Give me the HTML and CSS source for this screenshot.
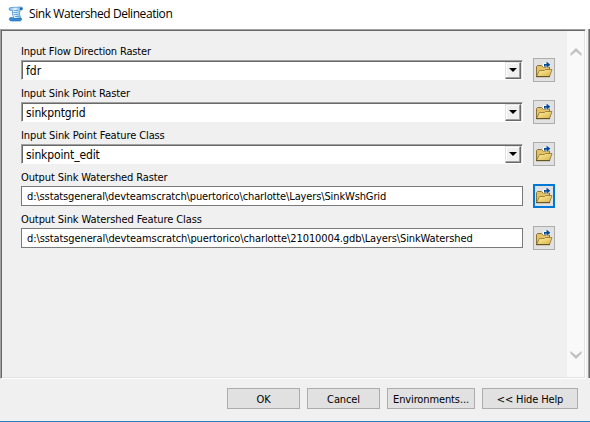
FILE: index.html
```
<!DOCTYPE html>
<html lang="en">
<head>
<meta charset="utf-8">
<title>Sink Watershed Delineation</title>
<link rel="stylesheet" href="styles.css">
</head>
<body>
<svg width="0" height="0" class="defs">
  <defs>
    <linearGradient id="gold" x1="0" y1="0" x2="1" y2="1"><stop offset="0" stop-color="#fff3a0"/><stop offset="1" stop-color="#d9b04a"/></linearGradient>
    <linearGradient id="paper" x1="0" y1="0" x2="1" y2="0"><stop offset="0" stop-color="#6db4ec"/><stop offset=".45" stop-color="#e4f4ff"/><stop offset="1" stop-color="#4b97d8"/></linearGradient>
    <symbol id="folder" viewBox="0 0 18 18">
      <path d="M1.500 15.500V5.500l1-1h4l1.500 1.500H14.500v9.500z" fill="#e3c365" stroke="#8b7233"/>
      <path d="M1.500 15.500L4.500 9.500h5l1-1h6.500l-2.500 7z" fill="url(#gold)" stroke="#8b7233" stroke-width=".8"/>
      <path d="M1 15.700h14" stroke="#5a471c" stroke-width=".9"/>
      <path d="M8 6V2.500h3V0l5.500 3.700L11 7V5h-1.500v1z" fill="#fff"/>
      <path d="M9 5.500V3h2.500V.500l4 3.200-4 3V4.500h-1v1z" fill="#084b91"/>
    </symbol>
  </defs>
</svg>
<div class="window">
  <header class="title">
    <svg class="scroll-icon" viewBox="0 0 16 16">
      <path d="M3 1.500Q1 1.500 1 3t2 1.500h1.500Q3.500 8 6 12.500H13Q10.500 8 12 4h1.500Q15 3.500 14.500 2T12.500 1z" fill="url(#paper)" stroke="#4089c9" stroke-width=".7"/>
      <path d="M2.500 11.500Q1 12 1.300 13.500T3.500 15H12q2-.5 1.500-2.500H6Q5 11 2.500 11.500z" fill="#378bd4" stroke="#1b64a9" stroke-width=".6"/>
      <path d="M6 4.500h4M5.500 6.500h4M6 8.500h4M7 10.500h4" stroke="#4b98d9" stroke-width=".8"/>
      <path d="M12.500 1.500Q11.500 2.500 12 4h1.500Q15.500 2.500 12.500 1.500" fill="#1769b5"/>
    </svg>
    <h1>Sink Watershed Delineation</h1>
  </header>
  <div class="body">
    <main class="panel">
      <form class="fields">
        <div class="field"><div class="main"><label class="l1">Input Flow Direction Raster</label><div class="combo"><span class="v1">fdr</span><i class="drop"></i></div></div><button type="button" class="browse"><svg><use href="#folder"/></svg></button></div>
        <div class="field"><div class="main"><label class="l2">Input Sink Point Raster</label><div class="combo"><span class="v2">sinkpntgrid</span><i class="drop"></i></div></div><button type="button" class="browse"><svg><use href="#folder"/></svg></button></div>
        <div class="field"><div class="main"><label class="l3">Input Sink Point Feature Class</label><div class="combo"><span class="v3">sinkpoint_edit</span><i class="drop"></i></div></div><button type="button" class="browse"><svg><use href="#folder"/></svg></button></div>
        <div class="field"><div class="main"><label class="l4">Output Sink Watershed Raster</label><div class="path"><span class="v4">d:\sstatsgeneral\devteamscratch\puertorico\charlotte\Layers\SinkWshGrid</span></div></div><button type="button" class="browse active"><svg><use href="#folder"/></svg></button></div>
        <div class="field"><div class="main"><label class="l5">Output Sink Watershed Feature Class</label><div class="path"><span class="v5">d:\sstatsgeneral\devteamscratch\puertorico\charlotte\21010004.gdb\Layers\SinkWatershed</span></div></div><button type="button" class="browse"><svg><use href="#folder"/></svg></button></div>
      </form>
      <div class="scrollbar">
        <svg viewBox="0 0 12 9"><path d="M.5 6.500L6 1l5.500 5.500v2.500L6 4.500.5 9z" fill="#bfbfbf"/></svg>
        <svg viewBox="0 0 12 9"><path d="M.5 2.500L6 8l5.500-5.500V0L6 4.500.5 0z" fill="#bfbfbf"/></svg>
      </div>
    </main>
    <div class="edge"></div>
  </div>
  <footer class="actions">
    <button class="ok">OK</button><button class="cancel">Cancel</button><button class="env">Environments...</button><button class="help">&lt;&lt; Hide Help</button>
  </footer>
</div>
</body>
</html>
```
FILE: styles.css
```
* { box-sizing: border-box; }
body { margin: 0; background: #f0f0f0; color: #000; font: 11px/14px "DejaVu Sans Condensed", "DejaVu Sans", sans-serif; font-stretch: condensed; }
.defs { position: absolute; }
.window { width: 590px; height: 422px; display: flex; flex-direction: column; border-bottom: 1px solid #2a7fc0; background: #f0f0f0; }
.title { height: 29px; flex: none; background: #fff; display: flex; align-items: flex-start; padding: 6px 0 0 8px; }
.scroll-icon { width: 16px; height: 16px; }
h1 { margin: 0 0 0 5px; font: 12px/16px "Open Sans", "Noto Sans", sans-serif; letter-spacing: -.43px; white-space: nowrap; }
.body { display: flex; justify-content: space-between; height: 350px; flex: none; }
.panel { width: 586px; border: 1px solid #a0a0a0; border-right-color: #fff; border-bottom-color: #fff; display: flex; background: #f0f0f0; box-shadow: inset 1px 1px #696969, inset -1px -1px #e3e3e3; }
.fields { flex: 1; padding: 14px 0 0 20px; }
.field { display: flex; height: 42px; gap: 10px; }
.main { width: 502px; }
label { display: block; height: 16px; line-height: 16px; white-space: nowrap; }
.combo, .path { height: 20px; background: #fff; display: flex; white-space: nowrap; }
.combo { border: 1px solid #a0a0a0; border-right-color: #fff; border-bottom-color: #fff; box-shadow: inset 1px 1px #696969, inset -1px 0 #e3e3e3; padding: 1px 1px 1px 4px; font: 12px/19px "DejaVu Sans Condensed", "DejaVu Sans", sans-serif; font-stretch: condensed; justify-content: space-between; }
.path { border: 1px solid #7a7a7a; padding-left: 5px; line-height: 19px; }
.l1, .l2 { letter-spacing: -.16px; }
.l3, .l4 { letter-spacing: -.115px; }
.l5 { letter-spacing: -.1px; }
.v2, .v3 { letter-spacing: -.12px; }
.v4 { letter-spacing: -.125px; }
.v5 { letter-spacing: -.105px; }
.drop { width: 16px; height: 17px; background: #f0f0f0; border: 1px solid #e3e3e3; border-right-color: #696969; border-bottom-color: #696969; box-shadow: inset -1px -1px #a0a0a0, inset 1px 1px #fff; display: flex; align-items: center; justify-content: center; padding-bottom: 1px; }
.drop::before { content: ""; border: 4px solid transparent; border-top-color: #000; border-bottom: 0; }
.browse { width: 22px; height: 24px; margin-top: 14px; padding: 0; border: 1px solid #adadad; background: #e1e1e1; display: flex; align-items: center; justify-content: center; }
.browse svg { width: 18px; height: 18px; flex: none; }
.active { border: 2px solid #0078d7; }
.scrollbar { width: 17px; background: #f9f9f9; margin: 1px 1px 1px 0; padding: 16px 0 17px; display: flex; flex-direction: column; align-items: center; justify-content: space-between; }
.scrollbar svg { width: 12px; height: 9px; }
.edge { width: 2px; height: 349px; background: linear-gradient(90deg, #a0a0a0 50%, #696969 50%); }
.actions { display: flex; justify-content: flex-end; gap: 7px; padding: 9px 12px 0 0; }
.actions button { height: 21px; padding: 1px 0 0; border: 1px solid #adadad; background: #e1e1e1; color: #000; font: inherit; letter-spacing: -.12px; line-height: 19px; white-space: nowrap; }
.ok, .cancel { width: 73px; }
.env { width: 88px; }
.help { width: 96px; }
```
